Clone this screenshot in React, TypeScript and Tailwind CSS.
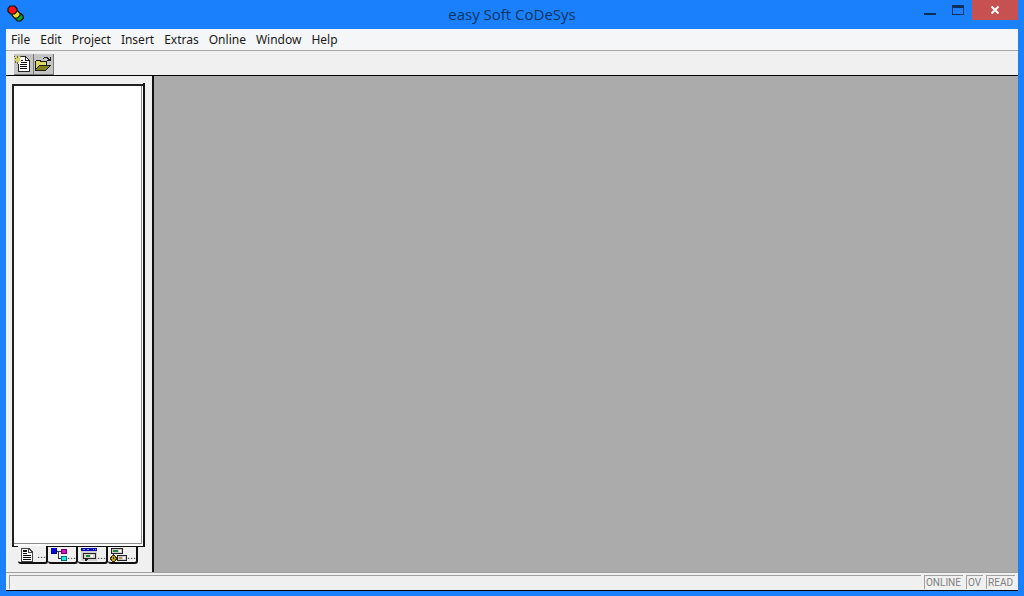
import type { ReactNode } from "react";

const menus = ["File", "Edit", "Project", "Insert", "Extras", "Online", "Window", "Help"];

function AppIcon() {
  return (
    <svg width="18" height="17" viewBox="0 0 18 17" className="block" aria-hidden="true">
      <g stroke="#101010" strokeWidth="1.2">
        <path d="M9 8.5h5l2.2 2.5v2.5L13.500 16H10.500L8 13.500z" fill="#12a02c" />
        <path d="M6 6h5l2 2.400v2L10.500 13H7.500L5 10.500z" fill="#e8dc28" />
        <path d="M3 1h4.500L10 3.500v3L7.500 9H3.500L1 6.500v-3z" fill="#f01414" />
      </g>
    </svg>
  );
}

function NewIcon() {
  return (
    <svg width="18" height="18" viewBox="1 0 18 18" className="block" shapeRendering="crispEdges" aria-hidden="true">
      <path d="M5 2h8l3 4v11H5z" fill="#fff" />
      <path d="M8 1h5v1h1v1h1v1h1v1h1v12H5V9h1v7h10V6h-4V2H8zM13 3v2h2V4h-1V3z" fill="#222" />
      <path d="M8 5h2v1H8zM8 7h6v1H8zM7 9h7v1H7zM7 11h7v1H7zM7 13h7v1H7z" fill="#111" />
      <path d="M2 1h1v1H2zM3 2h1v1H3zM5 0h1v3H5zM7 2h1v1H7zM1 4h3v1H1zM3 3h4v3H3zM3 6h1v1H3zM5 6h1v2H5zM7 6h1v1H7z" fill="#d4d464" />
      <path d="M2 3h1v1H2zM4 1h1v2H4zM2 6h1v2H2zM4 7h1v2H4zM7 1h1v1H7zM1 1h1v1H1z" fill="#66662c" />
    </svg>
  );
}

function OpenIcon() {
  return (
    <svg width="18" height="18" viewBox="0 0 18 18" className="block" shapeRendering="crispEdges" aria-hidden="true">
      <path d="M1 6h1V5h5v1h6v4h4v1h-1v1h-1v1h-1v1h-1v1h-1v1H1z" fill="#1c1c08" />
      <path d="M2 6h4v1h6v3H5v1H4v1H3v1H2z" fill="#dcd868" />
      <path d="M5 11h10v1h-1v1h-1v1h-1v1H2v-1h1v-1h1v-1h1z" fill="#80801c" />
      <path d="M9 3h1V2h4v1h1v1h1V2h1v4h-4V5h1V4h-1V3h-3v1H9z" fill="#1c1c1c" />
    </svg>
  );
}

function PouIcon() {
  return (
    <svg width="17" height="16" viewBox="0 0 17 16" className="block" shapeRendering="crispEdges" aria-hidden="true">
      <path d="M1 1h8l4 4v10H1z" fill="#fff" />
      <path d="M1 1h9v1h1v1h1v1h1v11H1zM2 2v12h10V6H8V2zM9 3v2h2V4h-1V3z" fill="#444" />
      <path d="M3 3h4v2H3zM3 6h4v1H3zM3 8h8v1H3zM3 10h8v1H3zM3 12h8v1H3z" fill="#111" />
    </svg>
  );
}

function TypesIcon() {
  return (
    <svg width="17" height="16" viewBox="0 0 17 16" className="block" shapeRendering="crispEdges" aria-hidden="true">
      <path d="M6 4h6v1H6zM8 5h1v7H8zM8 11h4v1H8z" fill="#333" />
      <path d="M1 1h6v6H1z" fill="#000090" />
      <path d="M1 1h5v5H1z" fill="#0808d8" />
      <path d="M11 2h6v5h-6z" fill="#700070" />
      <path d="M12 3h4v3h-4z" fill="#d010c0" />
      <path d="M11 9h6v5h-6z" fill="#007070" />
      <path d="M12 10h4v3h-4z" fill="#20e8e8" />
    </svg>
  );
}

function VisuIcon() {
  return (
    <svg width="17" height="16" viewBox="0 0 17 16" className="block" shapeRendering="crispEdges" aria-hidden="true">
      <path d="M1 1h16v13H1z" fill="#d0d0d0" />
      <path d="M1 1h16v3H1z" fill="#0c0cb8" />
      <path d="M3 2h2v1H3zM7 2h2v1H7zM13 2h1v1h-1zM15 2h1v1h-1z" fill="#8888f8" />
      <path d="M3 6h13v6H8v1H7v1H5v-2H3z" fill="#222" />
      <path d="M4 7h11v4H4z" fill="#d4d4d4" />
      <path d="M6 8h4v2H6z" fill="#26803a" />
      <path d="M11 8h2v2h-2z" fill="#fff" />
    </svg>
  );
}

function ResourcesIcon() {
  return (
    <svg width="17" height="16" viewBox="0 0 17 16" className="block" shapeRendering="crispEdges" aria-hidden="true">
      <path d="M1 1h12v6H1zM7 8h10v6H7zM3 7h1v3H3z" fill="#222" />
      <path d="M2 2h10v4H2zM8 9h8v4H8z" fill="#ccc" />
      <path d="M3 3h5v2H3z" fill="#26803a" />
      <path d="M9 3h2v2H9z" fill="#fff" />
      <path d="M9 10h3v2H9z" fill="#c08858" />
      <path d="M13 10h2v2h-2z" fill="#fff" />
      <path d="M2 8h3v1h1v1h1v3H6v1H5v1H2v-1H1v-1H0v-3h1V9h1z" fill="#3c3400" />
      <path d="M2 9h3v2h1v1H5v2H2v-2H1v-1h1z" fill="#c0a020" />
      <path d="M3 10h1v2H3z" fill="#333" />
    </svg>
  );
}

function Tab({ label, active, children }: { label: string; active?: boolean; children: ReactNode }) {
  return (
    <button
      type="button"
      role="tab"
      aria-selected={!!active}
      aria-label={label}
      className={
        "flex h-[18px] w-[30px] items-start rounded-b-[3px] border-r-2 border-b-2 border-[#111] bg-[#f0f0f0] pl-[2px] " +
        (active ? "" : "border-t")
      }
    >
      <span className={active ? "shrink-0 pt-px" : "shrink-0"}>{children}</span>
      <span className="font-['Liberation_Sans',sans-serif] text-[11px] leading-4 text-[#333]">...</span>
    </button>
  );
}

function StatusCell({ children }: { children: ReactNode }) {
  return (
    <span className="h-[14px] border-t border-l border-[#a0a0a0] pr-[2px] pl-px leading-[13px]">{children}</span>
  );
}

export default function App() {
  return (
    <div className="flex h-screen flex-col bg-[#1a80fc] px-[6px] pb-[5px] font-['Noto_Sans','Open_Sans',sans-serif] text-black">
      <header className="grid h-[29px] shrink-0 grid-cols-[1fr_auto_1fr] items-start">
        <div className="pt-[5px] pl-px">
          <AppIcon />
        </div>
        <h1 className="font-['Open_Sans',sans-serif] text-[15px] leading-7 text-[#0d3564]">easy Soft CoDeSys</h1>
        <div className="flex justify-end">
          <button type="button" aria-label="Minimize" className="flex h-[20px] w-[28px] items-center justify-center">
            <svg width="12" height="12" viewBox="0 0 12 12" aria-hidden="true">
              <path d="M0 9h12v2H0z" fill="#0b2f5c" />
            </svg>
          </button>
          <button type="button" aria-label="Maximize" className="flex h-[20px] w-[28px] items-center justify-center">
            <svg width="12" height="12" viewBox="0 0 12 12" aria-hidden="true">
              <path d="M0 1h12v10H0zM1 4v6h10V4z" fill="#0b2f5c" fillRule="evenodd" />
            </svg>
          </button>
          <button type="button" aria-label="Close" className="flex h-[20px] w-[46px] items-center justify-center bg-[#c75050]">
            <svg width="10" height="10" viewBox="0 0 10 10" aria-hidden="true">
              <path d="M1.500 1.500l7 7M8.500 1.500l-7 7" stroke="#fff" strokeWidth="2" />
            </svg>
          </button>
        </div>
      </header>

      <nav className="flex h-[22px] shrink-0 items-center gap-[10px] border-b border-[#a8a8a8] bg-[#f5f6f7] pl-[5px]">
        {menus.map((m) => (
          <button key={m} type="button" className="text-xs leading-5 text-[#1a1a1a]">
            {m}
          </button>
        ))}
      </nav>

      <div className="flex h-[25px] shrink-0 items-end border-b border-black bg-[#f0f0f0] pl-[8px]" role="toolbar" aria-label="Standard">
        <button type="button" aria-label="New" className="flex h-[21px] w-[20px] items-center border-r border-b border-[#777] bg-[#c4c4c4]">
          <NewIcon />
        </button>
        <button type="button" aria-label="Open" className="flex h-[21px] w-[20px] items-center border-r border-b border-[#777] bg-[#c4c4c4]">
          <OpenIcon />
        </button>
      </div>

      <div className="flex min-h-0 flex-1">
        <aside className="flex w-[148px] shrink-0 flex-col border-r-2 border-[#111] bg-[#f0f0f0] pt-[7px] pr-[7px] pb-[8px] pl-[6px]">
          <div className="flex min-h-0 flex-1 flex-col border-r-2 border-[#111] pt-px">
            <div className="flex min-h-0 flex-1 flex-col border-t-2 border-l-2 border-[#222] bg-white pr-px pb-[2px]">
              <div className="flex-1 border-r border-b border-[#8c8c8c]" />
            </div>
          </div>
          <div role="tablist" className="flex">
            <div className="w-[6px] shrink-0 border-t border-[#111]" />
            <Tab label="POUs" active>
              <PouIcon />
            </Tab>
            <Tab label="Data types">
              <TypesIcon />
            </Tab>
            <Tab label="Visualizations">
              <VisuIcon />
            </Tab>
            <Tab label="Resources">
              <ResourcesIcon />
            </Tab>
            <div className="flex-1 border-t border-[#111]" />
          </div>
        </aside>
        <main className="flex-1 bg-[#ababab]" />
      </div>

      <footer className="flex h-[19px] shrink-0 gap-[3px] border-t border-b border-t-[#a0a0a0] border-b-black bg-[#f0f0f0] pt-[2px] pr-[3px] pl-[3px] font-['Roboto',sans-serif] text-[10px] text-[#808080]">
        <div className="h-[14px] flex-1 border-t border-l border-[#a0a0a0]" />
        <StatusCell>ONLINE</StatusCell>
        <StatusCell>OV</StatusCell>
        <StatusCell>READ</StatusCell>
      </footer>
    </div>
  );
}
